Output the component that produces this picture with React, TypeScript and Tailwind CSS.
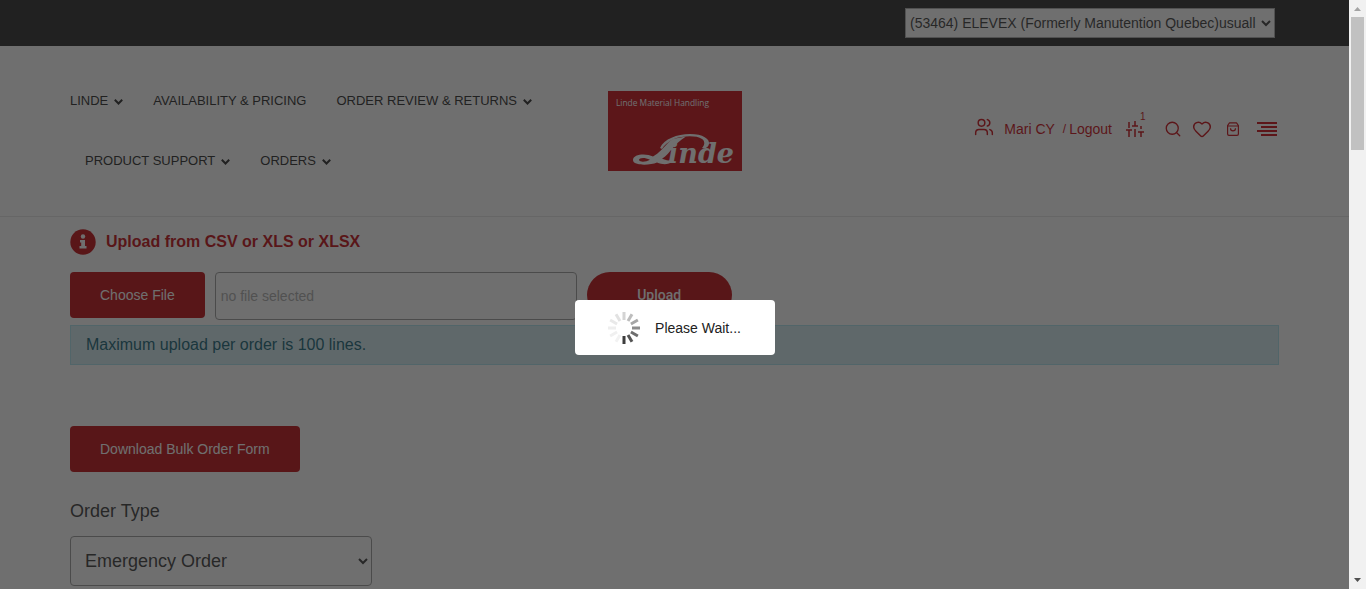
import { Heart, Search, Users } from "lucide-react";

const links = [
  { label: "LINDE", menu: true },
  { label: "AVAILABILITY & PRICING", menu: false },
  { label: "ORDER REVIEW & RETURNS", menu: true },
  { label: "PRODUCT SUPPORT", menu: true },
  { label: "ORDERS", menu: true },
];

function Logo() {
  return (
    <svg viewBox="0 0 134 80" className="h-20 w-[134px]" role="img" aria-label="Linde Material Handling">
      <rect width="134" height="80" fill="#c8000a" />
      <text x="8" y="15" fill="#fff" fontSize="8.400" fontFamily="'Open Sans', 'Noto Sans', sans-serif">
        Linde Material Handling
      </text>
      <g fill="#fff">
        <path d="M52 57C56 48 69 43 82 43C95 43 102 48 101 53C100 57 97 58 94 57C97 54 97 50 94 48C88 44 74 45 66 48C60 51 56 54 54 58Z" />
        <path d="M70 47L78 45.500C72 49 67 54 63 59C59 64 57 66 54 67.500C57 69 60 70 63 69L63 71.500C59 74 54 73.500 49 71.500C42 74.500 25 75 25 69C25 63 38 62 45 65.500C51 62 55 57 59 53C62 49 66 47 70 47ZM42 68.800C36 66 31 67 31 69C32 71.500 38 71 42 68.800Z" />
      </g>
      <text x="60" y="72" fill="#fff" fontSize="27" fontWeight="bold" fontStyle="italic" fontFamily="'DejaVu Serif', serif">
        inde
      </text>
    </svg>
  );
}

function Chevron() {
  return (
    <svg viewBox="0 0 9 6" className="mt-0.5 h-1.5 w-[9px]" fill="none" stroke="currentColor" strokeWidth="2" aria-hidden="true">
      <path d="M.8 .8L4.500 4.500L8.200 .8" />
    </svg>
  );
}

function Sliders() {
  return (
    <svg viewBox="0 0 18 16" className="h-4 w-[18px]" fill="none" stroke="currentColor" strokeWidth="1.500" aria-hidden="true">
      <path d="M3 1V7M3 9V16M0 9H6M9 0V5M9 8V16M6 5H12M15 5V8M15 11V16M12 11H18" />
    </svg>
  );
}

function Bag() {
  return (
    <svg viewBox="0 0 12 14" className="h-3.5 w-3" fill="none" stroke="currentColor" strokeLinejoin="round" strokeWidth="1.200" aria-hidden="true">
      <path d="M2.500 .8H9.500L11.400 3.500V12Q11.400 13.300 10 13.300H2Q.6 13.300 .6 12V3.500ZM.6 4H11.400M3.500 6.200C3.500 9.800 8.500 9.800 8.500 6.200" />
    </svg>
  );
}

function Spinner() {
  const shades = ["#d4d4d4", "#bdbdbd", "#a6a6a6", "#8c8c8c", "#6e6e6e", "#545454", "#3d3d3d", "#f2f2f2", "#f0f0f0", "#eeeeee", "#e9e9e9", "#e2e2e2"];
  return (
    <svg viewBox="-16 -16 32 32" className="size-8" aria-hidden="true">
      {shades.map((shade, i) => (
        <rect key={i} x="-1.500" y="-16" width="3" height="8" fill={shade} transform={`rotate(${i * 30})`} />
      ))}
    </svg>
  );
}

export default function App() {
  return (
    <div className="flex h-screen overflow-hidden bg-white font-['Liberation_Sans',Arial,sans-serif] text-sm text-[#222]">
      <div className="relative min-w-0 flex-1 overflow-hidden">
        <div className="bg-[#222] py-2">
          <div className="mx-auto flex w-full max-w-[1209px] justify-end pr-1">
            <select aria-label="Account" className="h-[30px] w-[370px] border border-[#aaa] bg-white text-sm text-[#333]">
              <option>(53464) ELEVEX (Formerly Manutention Quebec)usuall</option>
            </select>
          </div>
        </div>

        <header className="border-b border-[#e5e5e5] py-[25px]">
          <div className="mx-auto grid w-full max-w-[1209px] grid-cols-[1fr_134px_1fr] items-center">
            <nav className="flex flex-wrap pr-10 text-[13px]">
              {links.map((link) => (
                <a key={link.label} href="#" className="flex h-[60px] items-center gap-1.5 px-[15px] first:pl-0">
                  {link.label}
                  {link.menu && <Chevron />}
                </a>
              ))}
            </nav>
            <a href="#"><Logo /></a>
            <div className="flex items-center justify-end pr-0.5 pb-1 text-[#c8000a]">
              <a href="#" aria-label="Account" className="mr-2.5 pb-1"><Users size={20} strokeWidth={1.75} /></a>
              <a href="#">Mari CY</a>
              <span className="ml-2 mr-[3px] text-xs">/</span>
              <a href="#">Logout</a>
              <a href="#" aria-label="Compare" className="relative ml-3.5"><Sliders /><span className="absolute -top-2.5 left-3.5 text-[10px] leading-3">1</span></a>
              <a href="#" aria-label="Search" className="ml-5"><Search size={18} strokeWidth={1.75} /></a>
              <a href="#" aria-label="Wishlist" className="ml-2.5"><Heart size={20} strokeWidth={1.75} /></a>
              <a href="#" aria-label="Cart" className="ml-[15px]"><Bag /></a>
              <button aria-label="Menu" className="ml-[18px]">
                <svg viewBox="0 0 20 14" className="h-3.5 w-5" fill="currentColor"><path d="M0 0H20V2H0ZM4 4H20V6H4ZM0 8H20V10H0ZM4 12H20V14H4Z" /></svg>
              </button>
            </div>
          </div>
        </header>

        <main className="mx-auto w-full max-w-[1209px] pt-3">
          <h1 className="flex items-center gap-2.5 text-base font-bold leading-[26px] text-[#c00008]">
            <svg viewBox="0 0 26 26" className="size-[26px]" aria-hidden="true">
              <circle cx="13" cy="13" r="12.700" fill="#c00008" />
              <circle cx="13" cy="7.500" r="2.200" fill="#fff" />
              <path d="M10 11H15V17H16.500V19.500H9.500V17H11.200V13.500H10Z" fill="#fff" />
            </svg>
            Upload from CSV or XLS or XLSX
          </h1>
          <div className="mt-[17px] flex gap-2.5">
            <button className="h-[46px] rounded bg-[#bc0006] px-[30px] text-white">Choose File</button>
            <input aria-label="Selected file" readOnly placeholder="no file selected" className="h-12 w-[362px] rounded border border-[#999] bg-white px-[5px] placeholder:text-[#aaa]" />
            <button className="h-[46px] w-[145px] rounded-full bg-[#bc0006] font-['Roboto',sans-serif] font-medium text-white">Upload</button>
          </div>
          <p className="mt-[5px] border border-[#a9e3ee] bg-[#d1ecf1] px-[15px] py-[7px] text-base text-[#0c5c70]">Maximum upload per order is 100 lines.</p>
          <button className="mt-[61px] block h-[46px] rounded bg-[#bc0006] px-[30px] text-white">Download Bulk Order Form</button>
          <label htmlFor="order-type" className="mt-[25px] block text-lg text-[#333]">Order Type</label>
          <select id="order-type" className="mt-[11px] h-[50px] w-[302px] rounded-sm border border-[#999] bg-white pl-2.5 text-lg text-[#333]">
            <option>Emergency Order</option>
          </select>
        </main>

        <div className="absolute inset-0 flex items-center justify-center bg-[#222]/65">
          <div role="status" className="mt-[66px] flex h-[55px] w-[200px] items-center justify-center gap-[15px] rounded bg-white">
            <Spinner />
            Please Wait...
          </div>
        </div>
      </div>

      <div aria-hidden="true" className="flex w-[17px] shrink-0 flex-col items-center bg-[#f1f1f1]">
        <svg viewBox="0 0 17 17" className="size-[17px]"><path d="M5 11H12L8.500 7Z" fill="#a3a3a3" /></svg>
        <div className="h-[133px] w-[13px] bg-[#c1c1c1]" />
        <svg viewBox="0 0 17 17" className="mt-auto size-[17px]"><path d="M5 6H12L8.500 10Z" fill="#505050" /></svg>
      </div>
    </div>
  );
}
